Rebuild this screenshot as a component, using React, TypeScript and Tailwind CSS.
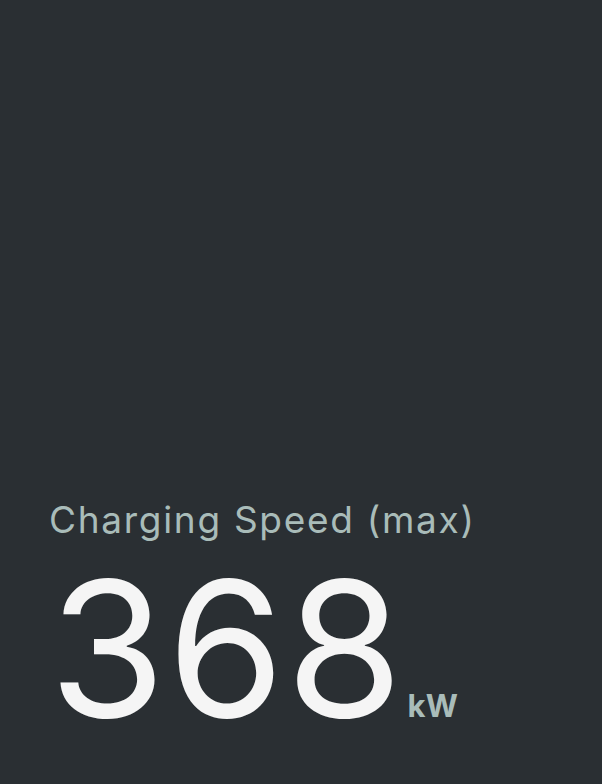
import React from 'react';

const App: React.FC = () => {
  return (
    <div
      className="w-[602px] h-[784px] bg-[#2a2f33] flex flex-col justify-end pl-[49px] pb-[55px]"
      style={{ fontFamily: 'Inter, "Noto Sans", sans-serif' }}
    >
      <p className="text-[37px] leading-none text-[#a9bcb9] tracking-[1.7px]">Charging Speed (max)</p>
      <div className="flex items-baseline mt-[36px]">
        <span className="text-[189px] leading-[150px] text-[#f5f5f5] tracking-[1.5px] font-normal">368</span>
        <span className="text-[31px] font-bold text-[#a9bcb9] ml-[3px] tracking-[0.5px]">kW</span>
      </div>
    </div>
  );
};

export default App;
